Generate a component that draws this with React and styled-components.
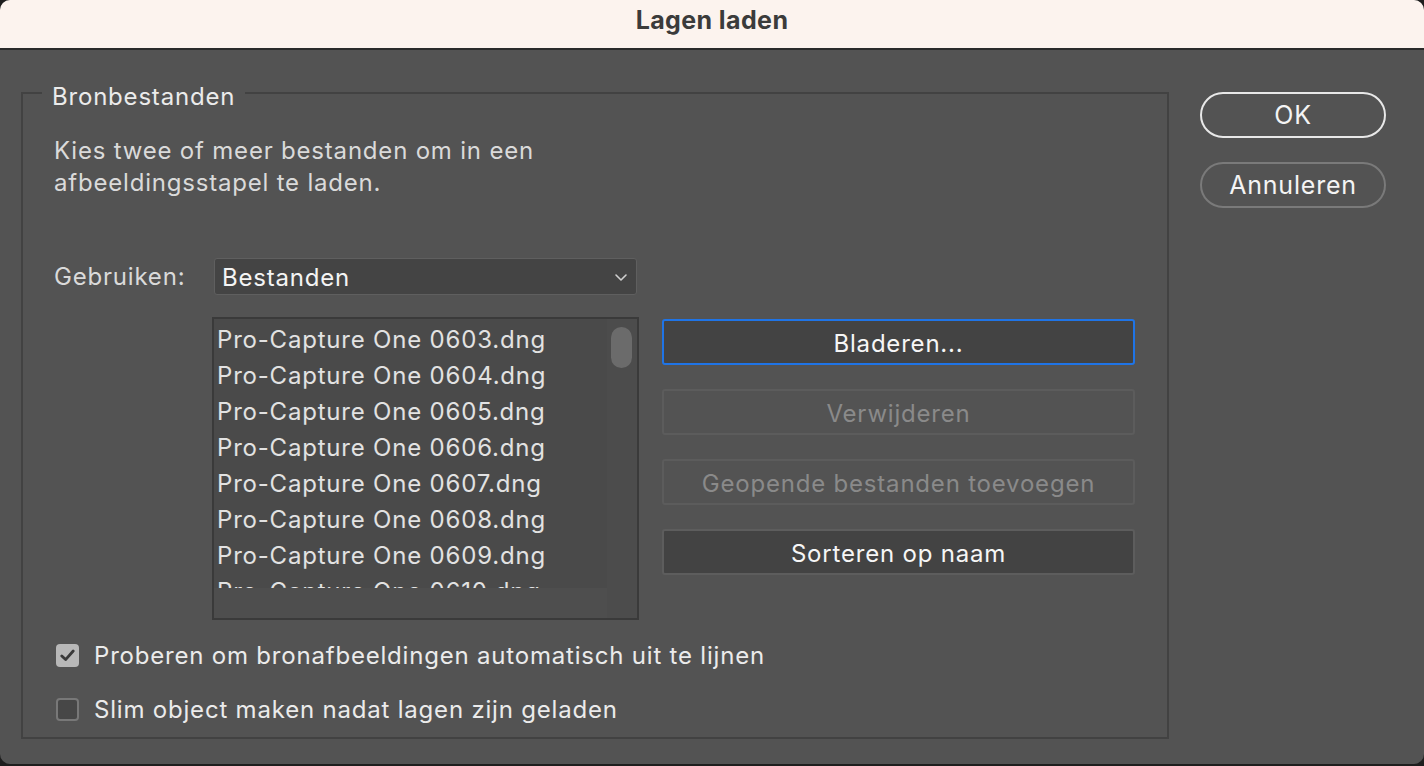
import React from "react"
import styled, { createGlobalStyle } from "styled-components"

const Global = createGlobalStyle`
  html, body {
    margin: 0;
    padding: 0;
    background: #1e1e1e;
  }
  body {
    font-family: "Inter", "Noto Sans", sans-serif;
    -webkit-font-smoothing: antialiased;
    letter-spacing: 0.8px;
  }
`

const Window = styled.div`
  width: 1424px;
  height: 764px;
  display: flex;
  flex-direction: column;
  background: #535353;
  border-radius: 10px;
  overflow: hidden;
`

const TitleBar = styled.div`
  height: 50px;
  flex: none;
  background: #fcf3ee;
  border-bottom: 2px solid #2a2a2a;
  display: flex;
  justify-content: center;
  padding-top: 5px;
  box-sizing: border-box;
  font-size: 25px;
  font-weight: 700;
  letter-spacing: 0.4px;
  color: #3b3b3b;
`

const Body = styled.div`
  flex: 1;
  display: flex;
  align-items: flex-start;
  padding: 25px 38px 0 21px;
  gap: 31px;
`

const Group = styled.fieldset`
  margin: 0;
  width: 1148px;
  height: 664px;
  box-sizing: border-box;
  border: 2px solid #424242;
  padding: 0 0 0 31px;
  display: flex;
  flex-direction: column;
`

const Legend = styled.legend`
  margin-left: -12px;
  padding: 8px 10px 0;
  font-size: 24px;
  line-height: 28px;
  color: #ebebeb;
`

const Intro = styled.p`
  margin: 24px 0 0;
  width: 520px;
  font-size: 24px;
  line-height: 32px;
  color: #dadada;
`

const UseRow = styled.div`
  margin-top: 59px;
  display: flex;
  align-items: center;
`

const Label = styled.span`
  width: 160px;
  font-size: 24px;
  color: #dadada;
`

const Select = styled.div`
  width: 423px;
  height: 37px;
  box-sizing: border-box;
  background: #444444;
  border: 1px solid #5f5f5f;
  border-radius: 3px;
  display: flex;
  align-items: center;
  justify-content: space-between;
  padding: 1px 8px 0 7px;
  font-size: 24px;
  color: #f4f4f4;
`

const FileRow = styled.div`
  margin-top: 22px;
  margin-left: 158px;
  display: flex;
  gap: 23px;
`

const ListBox = styled.div`
  width: 427px;
  height: 303px;
  box-sizing: border-box;
  border: 2px solid #3a3a3a;
  background: #4a4a4a;
  display: grid;
  grid-template-columns: 1fr 30px;
  grid-template-rows: 1fr 30px;
`

const Items = styled.div`
  overflow: hidden;
  padding: 3px 0 0 3px;
`

const Item = styled.div`
  height: 36px;
  line-height: 36px;
  font-size: 24px;
  color: #e2e2e2;
  white-space: nowrap;
`

const VTrack = styled.div`
  background: #4c4c4c;
  padding: 8px 0 0 4px;
`

const Thumb = styled.div`
  width: 21px;
  height: 41px;
  border-radius: 11px;
  background: #6b6b6b;
`

const HTrack = styled.div`
  background: #4e4e4e;
`

const Corner = styled.div`
  background: #4c4c4c;
`

const Buttons = styled.div`
  display: flex;
  flex-direction: column;
  gap: 24px;
  padding-top: 2px;
`

const Button = styled.div`
  width: 473px;
  height: 46px;
  box-sizing: border-box;
  border-radius: 3px;
  display: flex;
  align-items: center;
  justify-content: center;
  padding-top: 2px;
  font-size: 24px;
  background: ${p => (p.disabled ? "#535353" : "#434343")};
  border: ${p =>
    p.focused ? "2px solid #1f74e6" : p.disabled ? "2px solid #5c5c5c" : "2px solid #5d5d5d"};
  color: ${p => (p.disabled ? "#8a8a8a" : "#f6f6f6")};
`

const Checks = styled.div`
  margin-top: 22px;
  display: flex;
  flex-direction: column;
  gap: 28px;
  padding-left: 2px;
`

const CheckRow = styled.label`
  height: 26px;
  display: flex;
  align-items: center;
  gap: 15px;
  font-size: 24px;
  color: #ebebeb;
`

const Box = styled.span`
  width: 23px;
  height: 23px;
  box-sizing: border-box;
  border-radius: 4px;
  display: flex;
  align-items: center;
  justify-content: center;
  background: ${p => (p.checked ? "#b8b8b8" : "#474747")};
  border: ${p => (p.checked ? "none" : "2px solid #787878")};
`

const Side = styled.div`
  display: flex;
  flex-direction: column;
  gap: 24px;
  padding-top: 17px;
`

const Pill = styled.div`
  width: 186px;
  height: 46px;
  box-sizing: border-box;
  border-radius: 23px;
  display: flex;
  align-items: center;
  justify-content: center;
  font-size: 25px;
  color: #f4f4f4;
  border: ${p => (p.primary ? "2px solid #e8e8e8" : "2px solid #7a7a7a")};
`

const files = ["0603", "0604", "0605", "0606", "0607", "0608", "0609", "0610"]

const Check = ({ checked, children }) => (
  <CheckRow>
    <Box checked={checked}>
      {checked && (
        <svg width="15" height="13" viewBox="0 0 15 13">
          <path d="M1.8 7 L5.6 10.6 L13.2 2" fill="none" stroke="#3a3a3a" strokeWidth="2.8" strokeLinecap="round" strokeLinejoin="round" />
        </svg>
      )}
    </Box>
    {children}
  </CheckRow>
)

export default function App() {
  return (
    <>
      <Global />
      <Window>
        <TitleBar>Lagen laden</TitleBar>
        <Body>
          <Group>
            <Legend>Bronbestanden</Legend>
            <Intro>Kies twee of meer bestanden om in een afbeeldingsstapel te laden.</Intro>
            <UseRow>
              <Label>Gebruiken:</Label>
              <Select>
                Bestanden
                <svg width="14" height="9" viewBox="0 0 14 9">
                  <path d="M2 2 L7 7 L12 2" fill="none" stroke="#d0d0d0" strokeWidth="1.6" strokeLinecap="round" strokeLinejoin="round" />
                </svg>
              </Select>
            </UseRow>
            <FileRow>
              <ListBox>
                <Items>
                  {files.map(f => (
                    <Item key={f}>Pro-Capture One {f}.dng</Item>
                  ))}
                </Items>
                <VTrack>
                  <Thumb />
                </VTrack>
                <HTrack />
                <Corner />
              </ListBox>
              <Buttons>
                <Button focused>Bladeren...</Button>
                <Button disabled>Verwijderen</Button>
                <Button disabled>Geopende bestanden toevoegen</Button>
                <Button>Sorteren op naam</Button>
              </Buttons>
            </FileRow>
            <Checks>
              <Check checked>Proberen om bronafbeeldingen automatisch uit te lijnen</Check>
              <Check>Slim object maken nadat lagen zijn geladen</Check>
            </Checks>
          </Group>
          <Side>
            <Pill primary>OK</Pill>
            <Pill>Annuleren</Pill>
          </Side>
        </Body>
      </Window>
    </>
  )
}
